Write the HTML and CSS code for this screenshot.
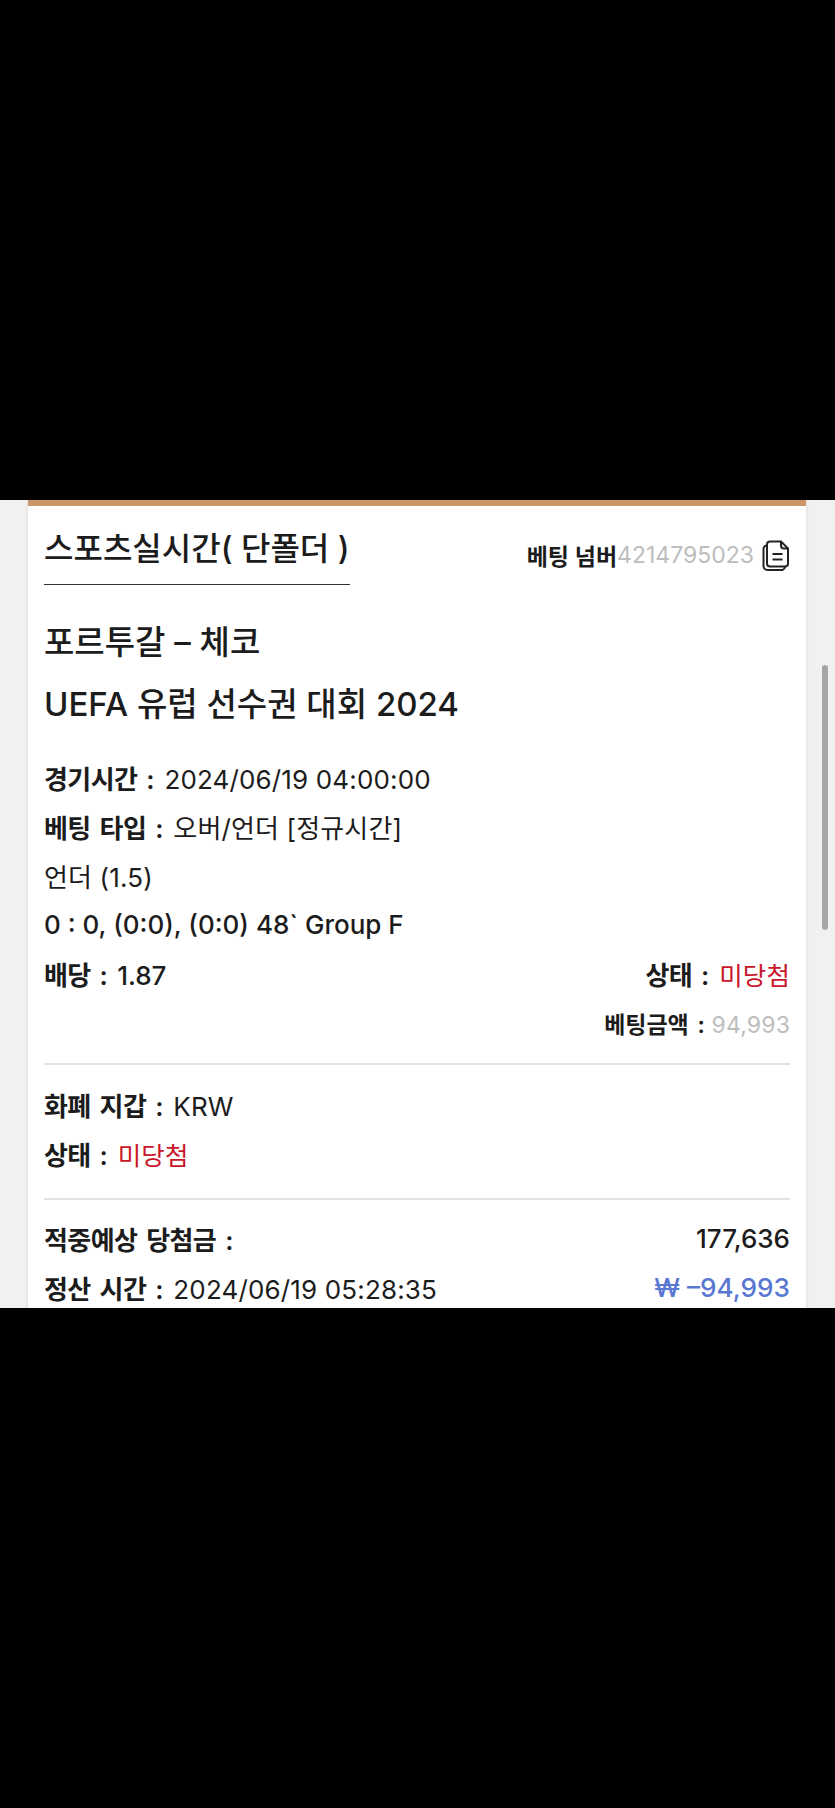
FILE: index.html
```html
<!DOCTYPE html>
<html lang="ko">
	<head>
		<title>베팅 내역</title>
		<meta charset="UTF-8">
		<meta name="viewport" content="width=device-width, initial-scale=1.0">
		<link rel="stylesheet" href="styles.css">
	</head>
	<body>
		<div class="bar-top"></div>
		<div class="screen">
			<div class="card">
				<div class="card-head">
					<h1 class="title">스포츠실시간( 단폴더 )</h1>
					<div class="bet-no">
						<b>베팅 넘버</b><span class="gray">4214795023</span>
						<svg class="copy" viewBox="0 0 28 32" fill="none" stroke="#222" stroke-width="2">
							<path d="M8 2.5h11l7 7v15a3 3 0 0 1-3 3H8a3 3 0 0 1-3-3v-19a3 3 0 0 1 3-3z"/>
							<path d="M19 2.5v4a3 3 0 0 0 3 3h4"/>
							<path d="M5 6.500a3.500 3.500 0 0 0-3.500 3.500v17a4 4 0 0 0 4 4h15a3.500 3.500 0 0 0 2.500-3"/>
							<path d="M10.500 15h10M10.500 20.500h10"/>
						</svg>
					</div>
				</div>

				<div class="match">
					<p>포르투갈 – 체코</p>
					<p>UEFA 유럽 선수권 대회 2024</p>
				</div>

				<div class="rows">
					<div class="row"><span><b>경기시간 :</b> 2024/06/19 04:00:00</span></div>
					<div class="row"><span><b>베팅 타입 :</b> 오버/언더 [정규시간]</span></div>
					<div class="row"><span>언더 (1.5)</span></div>
					<div class="row"><span class="semi">0 : 0, (0:0), (0:0) 48` Group F</span></div>
					<div class="row split">
						<span class="semi"><b>배당 :</b> 1.87</span>
						<span><b>상태 :</b> <span class="red">미당첨</span></span>
					</div>
					<div class="row small end"><span><b>베팅금액 :</b> <span class="gray">94,993</span></span></div>
				</div>

				<hr class="line">

				<div class="rows">
					<div class="row"><span><b>화폐 지갑 :</b> KRW</span></div>
					<div class="row"><span><b>상태 :</b> <span class="red">미당첨</span></span></div>
				</div>

				<hr class="line wide">

				<div class="rows">
					<div class="row split">
						<span><b>적중예상 당첨금 :</b></span>
						<span class="semi">177,636</span>
					</div>
					<div class="row split">
						<span><b>정산 시간 :</b> 2024/06/19 05:28:35</span>
						<span class="blue semi">₩ –94,993</span>
					</div>
				</div>
			</div>
			<div class="scrollbar"></div>
		</div>
		<div class="bar-bottom"></div>
	</body>
</html>
```

FILE: styles.css
```css
body {
	margin: 0;
	background: #000;
	font-family: "Inter", "Noto Sans CJK KR", sans-serif;
	color: #1c1c1c;
}
.bar-top {
	height: 500px;
}
.bar-bottom {
	height: 500px;
}
.screen {
	position: relative;
	height: 808px;
	overflow: hidden;
	background: #f2f1f0;
}
.card {
	width: 746px;
	height: 808px;
	margin-left: 28px;
	padding: 0 16px;
	background: #fff;
	border-top: 6px solid #cc9567;
	box-shadow: 0 0 4px rgba(0,0,0,.12);
}
.card-head {
	display: flex;
	justify-content: space-between;
	align-items: flex-start;
}
.title {
	margin: 0;
	padding: 16px 0 8px;
	border-bottom: 1px solid #333;
	font-size: 32px;
	font-weight: 500;
	line-height: 54px;
}
.bet-no {
	display: flex;
	align-items: center;
	margin-top: 32px;
	font-size: 23px;
}
.bet-no b {
	font-weight: 600;
}
.copy {
	width: 28px;
	height: 32px;
	margin-left: 8px;
}
.match {
	margin-top: 26px;
	font-size: 33px;
	font-weight: 500;
}
.match p {
	margin: 0;
	line-height: 62px;
}
.rows {
	font-size: 26px;
	letter-spacing: .15px;
}
.match + .rows {
	margin-top: 18px;
}
.row {
	display: flex;
	align-items: center;
	height: 49px;
}
.row b {
	margin-right: 3px;
	font-weight: 600;
	letter-spacing: -.6px;
	word-spacing: 3px;
}
.split {
	justify-content: space-between;
}
.end {
	justify-content: flex-end;
}
.small {
	font-size: 23px;
}
.small b {
	margin-right: 0;
	letter-spacing: 0;
}
.semi {
	font-weight: 500;
	letter-spacing: 0;
}
.gray {
	color: #bdbdbd;
}
.red {
	color: #c9162b;
	font-size: 25.5px;
}
.blue {
	color: #5a78d2;
	font-size: 26.2px;
}
.line {
	margin: 16px 0 15px;
	border: none;
	border-top: 2px solid #e2e2e2;
}
.line.wide {
	margin: 20px 0 14px;
}
.scrollbar {
	position: absolute;
	top: 165px;
	left: 822px;
	width: 6px;
	height: 265px;
	border-radius: 3px;
	background: #a6a6a6;
}
```
